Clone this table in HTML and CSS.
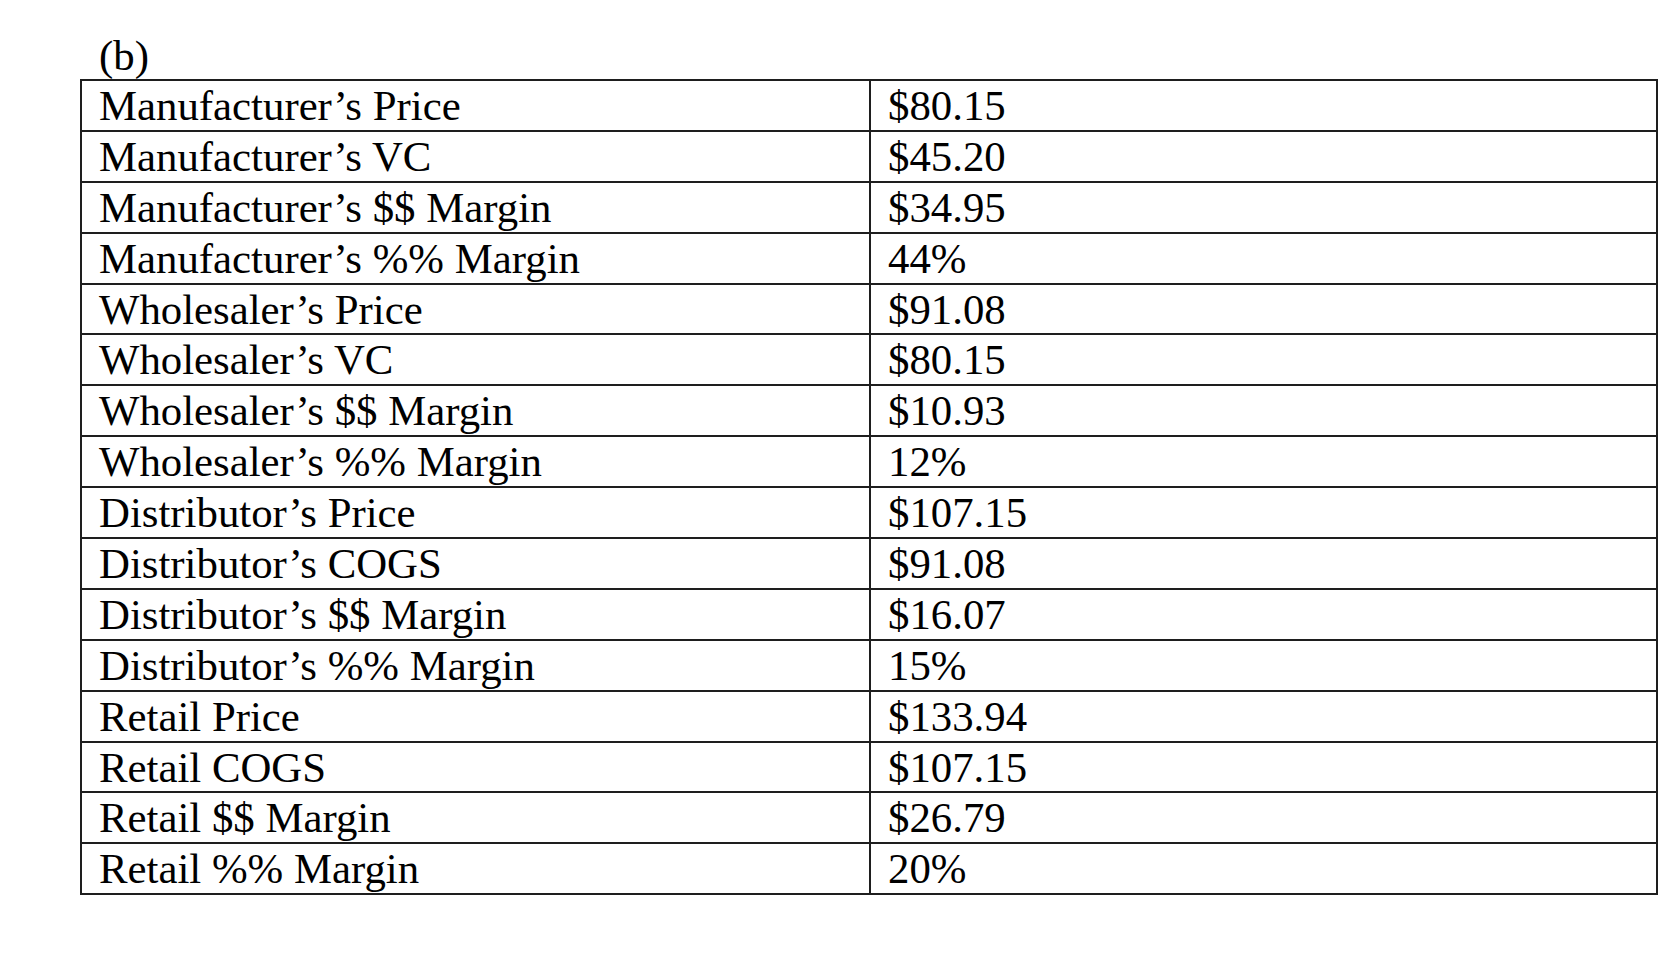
FILE: index.html
```html
<!DOCTYPE html>
<html lang="en">
<head>
<meta charset="utf-8">
<title>(b)</title>
<link rel="stylesheet" href="styles.css">
</head>
<body>
<div class="page">
  <div class="caption">(b)</div>
  <table class="margins">
    <colgroup><col class="c1"><col class="c2"></colgroup>
    <tbody>
      <tr><td>Manufacturer’s Price</td><td>$80.15</td></tr>
      <tr><td>Manufacturer’s VC</td><td>$45.20</td></tr>
      <tr><td>Manufacturer’s $$ Margin</td><td>$34.95</td></tr>
      <tr><td>Manufacturer’s %% Margin</td><td>44%</td></tr>
      <tr><td>Wholesaler’s Price</td><td>$91.08</td></tr>
      <tr><td>Wholesaler’s VC</td><td>$80.15</td></tr>
      <tr><td>Wholesaler’s $$ Margin</td><td>$10.93</td></tr>
      <tr><td>Wholesaler’s %% Margin</td><td>12%</td></tr>
      <tr><td>Distributor’s Price</td><td>$107.15</td></tr>
      <tr><td>Distributor’s COGS</td><td>$91.08</td></tr>
      <tr><td>Distributor’s $$ Margin</td><td>$16.07</td></tr>
      <tr><td>Distributor’s %% Margin</td><td>15%</td></tr>
      <tr><td>Retail Price</td><td>$133.94</td></tr>
      <tr><td>Retail COGS</td><td>$107.15</td></tr>
      <tr><td>Retail $$ Margin</td><td>$26.79</td></tr>
      <tr><td>Retail %% Margin</td><td>20%</td></tr>
    </tbody>
  </table>
</div>
</body>
</html>
```

FILE: styles.css
```css
html, body {
  margin: 0;
  padding: 0;
  background: #ffffff;
}

body {
  font-family: "Liberation Serif", "Times New Roman", serif;
  color: #000000;
  width: 1680px;
  height: 960px;
  overflow: hidden;
}

.page {
  padding: 38px 0 0 80px;
}

.caption {
  font-size: 42.8px;
  line-height: 36px;
  height: 41px;
  padding-left: 19px;
}

.margins {
  border-collapse: collapse;
  width: 1578px;
  table-layout: fixed;
  font-size: 42.8px;
}

.margins .c1 {
  width: 789px;
}

.margins td {
  border: 2px solid #1e1e1e;
  height: 46.9px;
  padding: 2px 0 0 17px;
  line-height: 46px;
  vertical-align: top;
  white-space: nowrap;
}
```
